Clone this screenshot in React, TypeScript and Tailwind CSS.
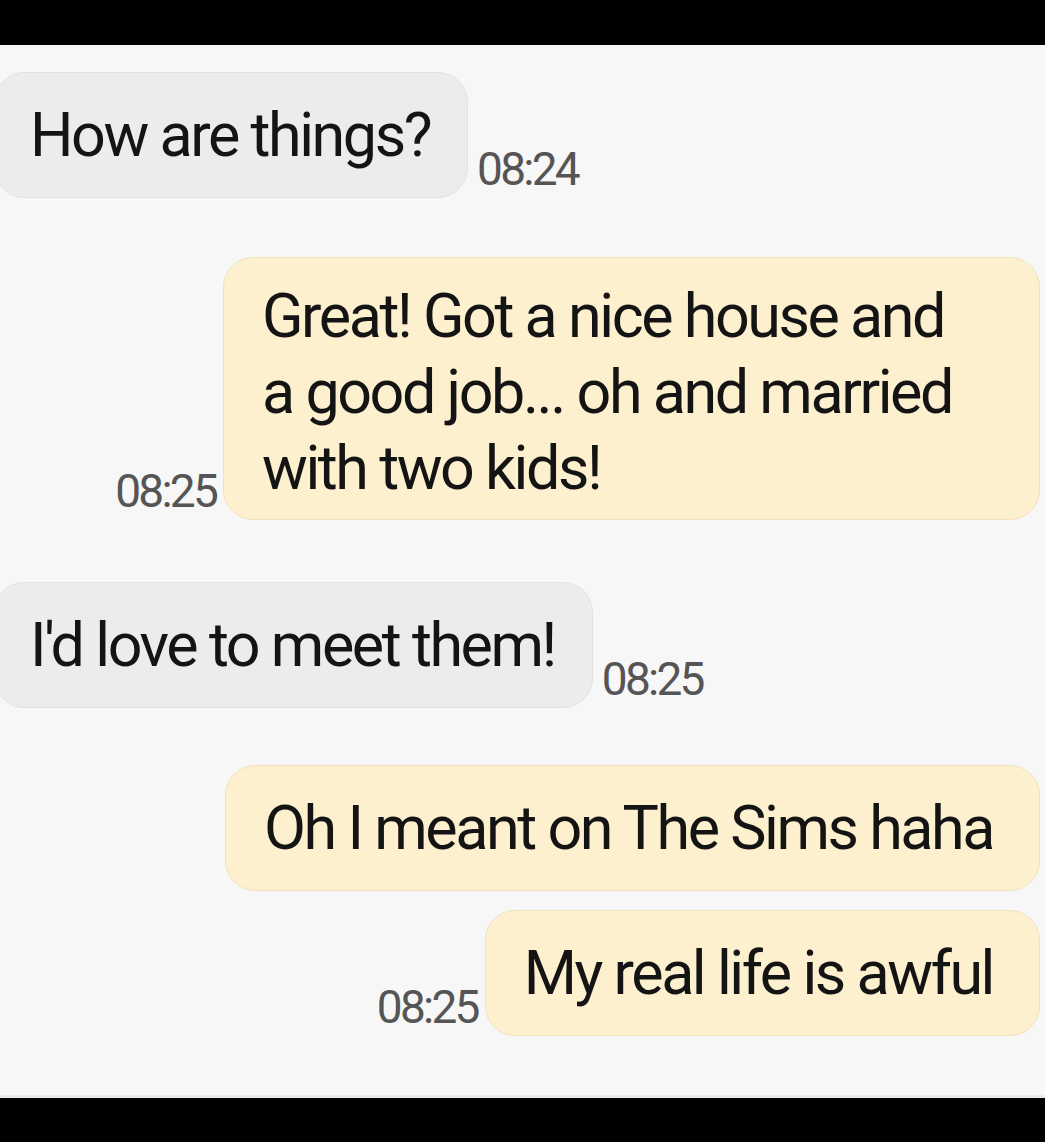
import { FC, ReactNode } from 'react';

const font = { fontFamily: 'Roboto, "Noto Sans", sans-serif' };

interface MsgProps {
  time: string;
  children: ReactNode;
  className?: string;
}

const Incoming: FC<MsgProps> = ({ time, children, className }) => (
  <div className={`flex items-end ${className ?? ''}`}>
    <div className="ml-[-6px] flex min-h-[126px] items-center rounded-[30px] border border-[#e2e2e2] bg-[#ececec] py-4 pl-[35px] pr-[37px] text-[61px] leading-[76px] tracking-[-0.04em] whitespace-nowrap text-[#141414]">
      {children}
    </div>
    <span className="mb-[6px] ml-[9px] text-[46px] leading-none tracking-[-0.06em] text-[#555555]">
      {time}
    </span>
  </div>
);

const Outgoing: FC<MsgProps> = ({ time, children, className }) => (
  <div className={`flex items-end justify-end pr-[5px] ${className ?? ''}`}>
    <span className="mb-[6px] mr-[7px] text-[46px] leading-none tracking-[-0.06em] text-[#555555]">
      {time}
    </span>
    <div className="flex min-h-[126px] items-center rounded-[30px] border border-[#f1e2bd] bg-[#fdf0cf] py-4 pl-[38px] pr-[46px] text-[61px] leading-[76px] tracking-[-0.04em] whitespace-nowrap text-[#141414]">
      {children}
    </div>
  </div>
);

const App: FC = () => {
  return (
    <div className="flex h-[1142px] w-[1045px] flex-col overflow-hidden bg-black" style={font}>
      <div className="h-[45px] shrink-0 bg-black" />
      <div className="flex flex-1 flex-col bg-[#f7f7f7] pt-[27px]">
        <Incoming time="08:24">How are things?</Incoming>

        <div className="mt-[59px] flex items-end justify-end pr-[5px]">
          <span className="mb-[6px] mr-[7px] text-[46px] leading-none tracking-[-0.06em] text-[#555555]">
            08:25
          </span>
          <div className="w-[817px] rounded-[30px] border border-[#f1e2bd] bg-[#fdf0cf] pb-[13px] pl-[38px] pr-[46px] pt-[20px] text-[61px] leading-[76px] tracking-[-0.04em] whitespace-nowrap text-[#141414]">
            <p>Great! Got a nice house and</p>
            <p>a good job... oh and married</p>
            <p>with two kids!</p>
          </div>
        </div>

        <Incoming time="08:25" className="mt-[62px]">
          I'd love to meet them!
        </Incoming>

        <div className="mt-[57px] flex justify-end pr-[5px]">
          <div className="flex min-h-[126px] items-center rounded-[30px] border border-[#f1e2bd] bg-[#fdf0cf] py-4 pl-[38px] pr-[46px] text-[61px] leading-[76px] tracking-[-0.04em] whitespace-nowrap text-[#141414]">
            Oh I meant on The Sims haha
          </div>
        </div>

        <Outgoing time="08:25" className="mt-[19px]">
          My real life is awful
        </Outgoing>
      </div>
      <div className="h-[47px] shrink-0 border-t-[3px] border-[#ececec] bg-black" />
    </div>
  );
};

export default App;
